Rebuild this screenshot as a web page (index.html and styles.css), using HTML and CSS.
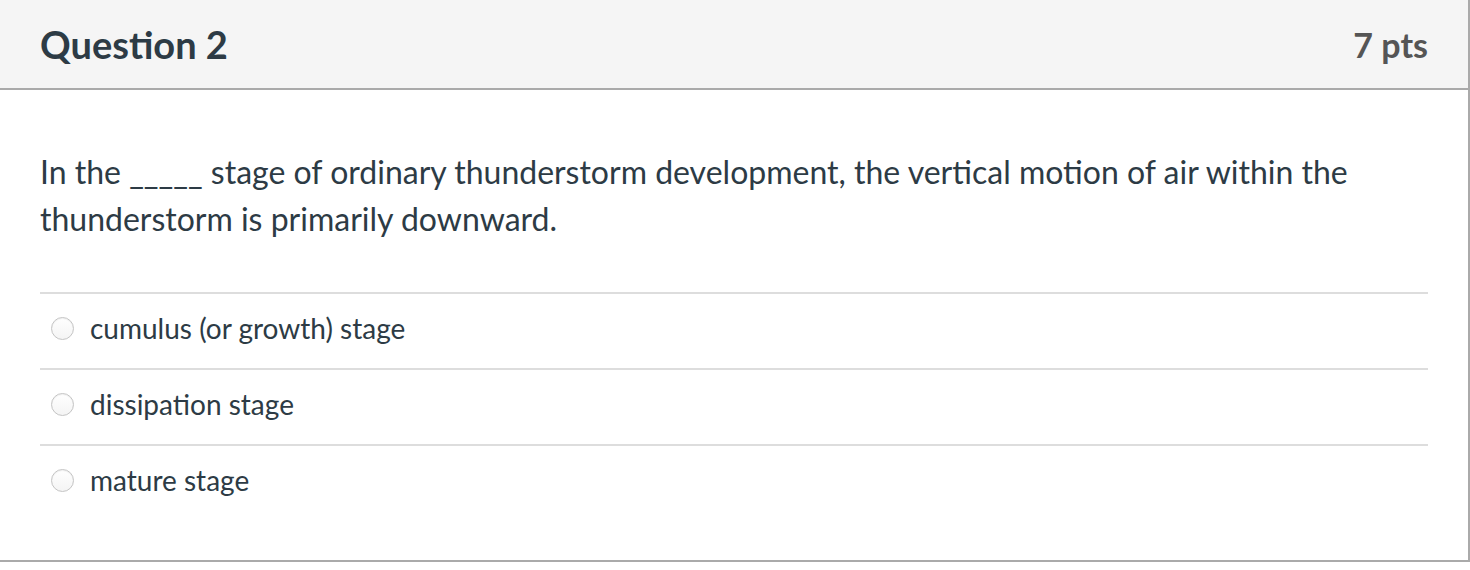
FILE: index.html
```html
<!DOCTYPE html>
<html>
<head>
<meta charset="utf-8">
<link rel="stylesheet" href="styles.css">
</head>
<body>
<div class="question">
  <div class="q-header">
    <span class="q-title">Question 2</span>
    <span class="q-points">7 pts</span>
  </div>
  <div class="q-body">
    <div class="q-text">In the _____ stage of ordinary thunderstorm development, the vertical motion of air within the thunderstorm is primarily downward.</div>
    <div class="answers">
      <label class="answer"><span class="radio"></span><span class="answer-text">cumulus (or growth) stage</span></label>
      <label class="answer"><span class="radio"></span><span class="answer-text">dissipation stage</span></label>
      <label class="answer"><span class="radio"></span><span class="answer-text">mature stage</span></label>
    </div>
  </div>
</div>
</body>
</html>
```
FILE: styles.css
```css
html, body {
  margin: 0;
  padding: 0;
  background: #ffffff;
}
body {
  font-family: Lato, "Noto Sans", sans-serif;
  color: #2d3b45;
}
.question {
  width: 1470px;
  height: 562px;
  box-sizing: border-box;
  border-right: 2px solid #aaaaaa;
  border-bottom: 2px solid #aaaaaa;
  display: flex;
  flex-direction: column;
}
.q-header {
  height: 90px;
  flex: none;
  box-sizing: border-box;
  background: #f5f5f5;
  border-bottom: 2px solid #aaaaaa;
  display: flex;
  align-items: center;
  justify-content: space-between;
  padding: 0 40px 0 40px;
}
.q-title {
  font-size: 38px;
  font-weight: 700;
  color: #2d3b45;
}
.q-points {
  font-size: 34px;
  font-weight: 700;
  color: #555555;
}
.q-body {
  padding: 0 40px;
}
.q-text {
  font-size: 32px;
  line-height: 47px;
  padding-top: 58px;
  padding-bottom: 50px;
}
.answers {
  display: flex;
  flex-direction: column;
}
.answer {
  display: flex;
  align-items: center;
  height: 76px;
  box-sizing: border-box;
  border-top: 2px solid #dddddd;
  padding-bottom: 6px;
  font-size: 28px;
}
.radio {
  width: 23px;
  height: 23px;
  box-sizing: border-box;
  border-radius: 50%;
  border: 1px solid #c4c4c4;
  background: linear-gradient(#ffffff, #f4f4f4);
  box-shadow: inset 0 1px 1px rgba(0,0,0,0.06);
  margin-left: 11px;
  margin-right: 16px;
  flex: none;
}
```
